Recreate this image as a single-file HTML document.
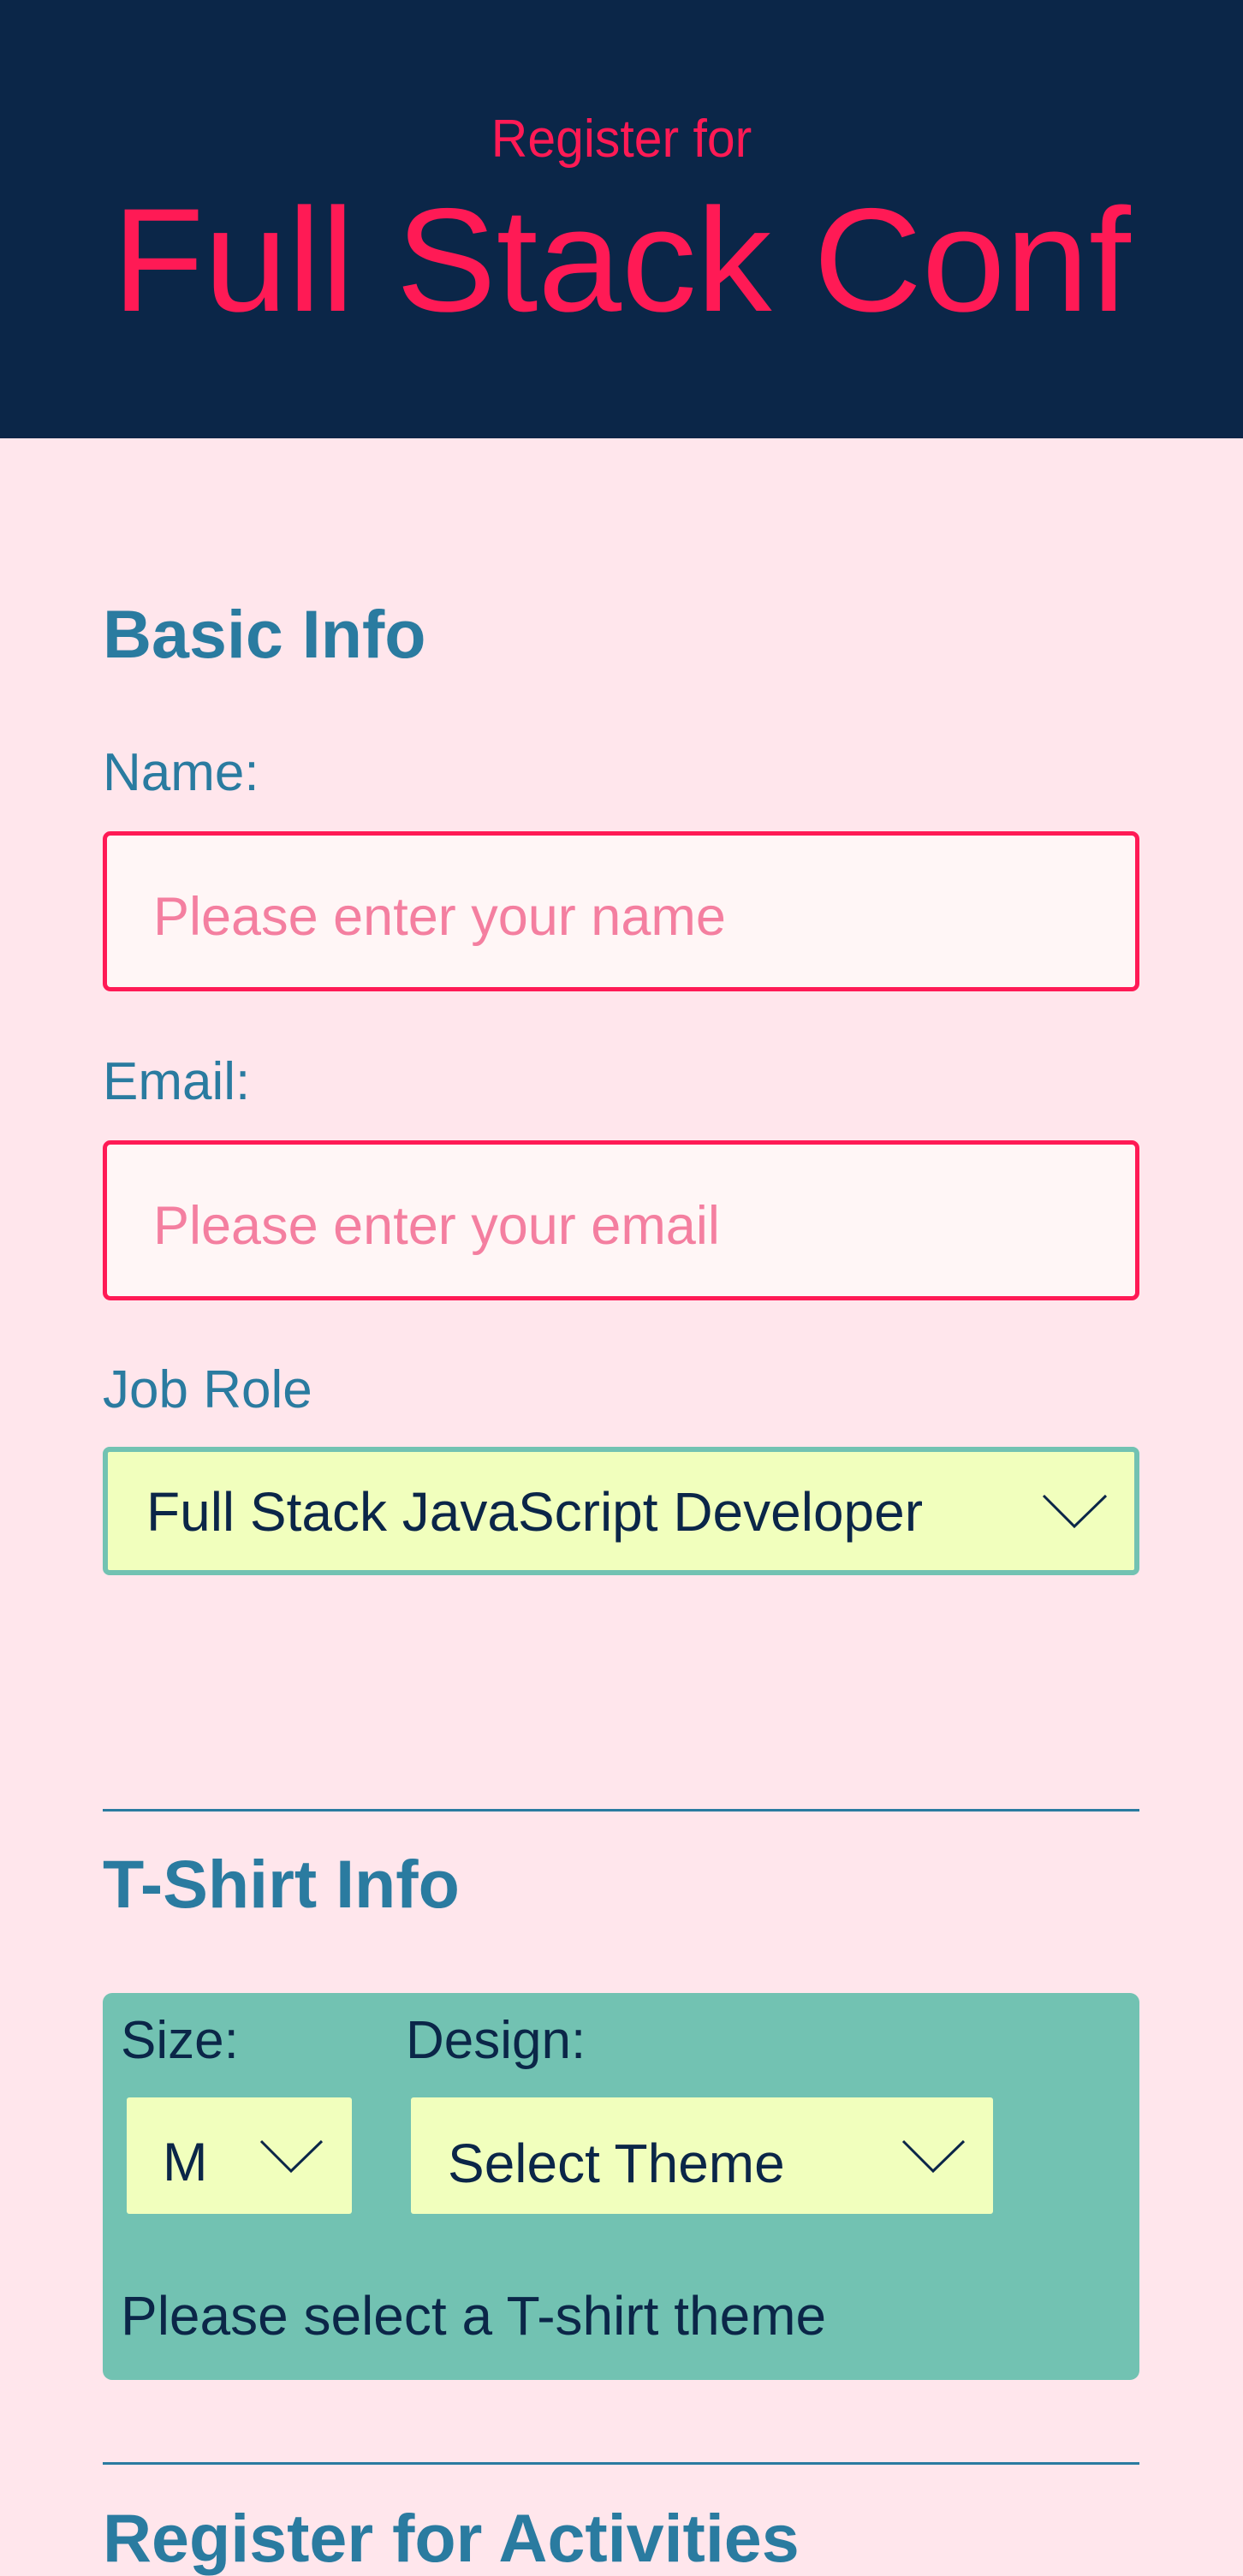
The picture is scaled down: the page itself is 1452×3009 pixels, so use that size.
<!DOCTYPE html>
<html><head><meta charset="utf-8"><style>
body{margin:0;width:1452px;height:2984px;overflow:hidden;background:#ffe6ec;font-family:"Liberation Sans",Arial,sans-serif;position:relative}
.a{position:absolute;white-space:nowrap;line-height:1}
header{position:absolute;left:0;top:0;width:1452px;height:512px;background:#0b2648}
.h2{color:#2a7ba0;font-weight:bold;font-size:79px}
.lab{color:#2a7ba0;font-size:62px}
.inp{position:absolute;left:120px;width:1211px;height:187px;box-sizing:border-box;border:5px solid #ff1a55;border-radius:9px;background:#fff6f6}
.ph{color:#f47fa0;font-size:63px}
.dk{color:#0b2648}
.hr{position:absolute;left:120px;width:1211px;height:3px;background:#2a7ba0}
.sel{position:absolute;background:#f1ffbd;border-radius:3px}
</style></head><body>
<header></header>
<div class="a" style="left:0;width:1452px;text-align:center;top:132px;font-size:62px;color:#ff1a55;transform:scaleX(0.95)">Register for</div>
<div class="a" style="left:0;width:1452px;text-align:center;top:218px;font-size:172px;color:#ff1a55;transform:scaleX(1.02)">Full Stack Conf</div>

<div class="a h2" style="left:120px;top:701px">Basic Info</div>
<div class="a lab" style="left:120px;top:872px">Name:</div>
<div class="inp" style="top:971px"></div>
<div class="a ph" style="left:179px;top:1040px">Please enter your name</div>
<div class="a lab" style="left:120px;top:1233px">Email:</div>
<div class="inp" style="top:1332px"></div>
<div class="a ph" style="left:179px;top:1401px">Please enter your email</div>
<div class="a lab" style="left:120px;top:1593px">Job Role</div>
<div style="position:absolute;left:120px;top:1690px;width:1211px;height:150px;box-sizing:border-box;border:6px solid #72c2b2;border-radius:8px;background:#f1ffbd"></div>
<div class="a dk" style="left:171px;top:1734px;font-size:64px">Full Stack JavaScript Developer</div>
<svg style="position:absolute;left:1216px;top:1744px" width="80" height="44"><path d="M3 3 L39 39 L76 3" fill="none" stroke="#0b2648" stroke-width="3"/></svg>

<div class="hr" style="top:2113px"></div>
<div class="a h2" style="left:120px;top:2161px">T-Shirt Info</div>
<div style="position:absolute;left:120px;top:2328px;width:1211px;height:452px;background:#72c2b2;border-radius:11px"></div>
<div class="a dk" style="left:141px;top:2353px;font-size:62px">Size:</div>
<div class="a dk" style="left:474px;top:2353px;font-size:62px">Design:</div>
<div class="sel" style="left:148px;top:2450px;width:263px;height:136px"></div>
<div class="a dk" style="left:190px;top:2495px;font-size:63px">M</div>
<svg style="position:absolute;left:302px;top:2498px" width="80" height="44"><path d="M3 3 L38 38 L74 3" fill="none" stroke="#0b2648" stroke-width="3"/></svg>
<div class="sel" style="left:480px;top:2450px;width:680px;height:136px"></div>
<div class="a dk" style="left:523px;top:2495px;font-size:64px">Select Theme</div>
<svg style="position:absolute;left:1052px;top:2498px" width="80" height="44"><path d="M3 3 L38 38 L74 3" fill="none" stroke="#0b2648" stroke-width="3"/></svg>
<div class="a dk" style="left:141px;top:2673px;font-size:64px">Please select a T-shirt theme</div>

<div class="hr" style="top:2876px"></div>
<div class="a h2" style="left:120px;top:2925px">Register for Activities</div>
</body></html>
